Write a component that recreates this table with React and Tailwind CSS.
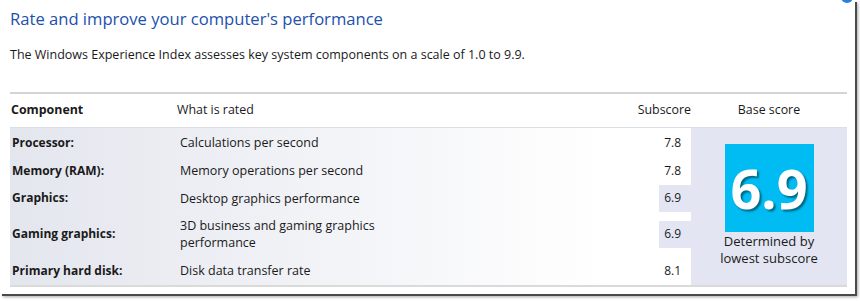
import React from "react";

const rows = [
  { label: "Processor:", what: ["Calculations per second"], score: "7.8", low: false, h: "h-[29px]" },
  { label: "Memory (RAM):", what: ["Memory operations per second"], score: "7.8", low: false, h: "h-[27px]" },
  { label: "Graphics:", what: ["Desktop graphics performance"], score: "6.9", low: true, h: "h-[28px]" },
  { label: "Gaming graphics:", what: ["3D business and gaming graphics", "performance"], score: "6.9", low: true, h: "h-[44px]" },
  { label: "Primary hard disk:", what: ["Disk data transfer rate"], score: "8.1", low: false, h: "h-[29px]" },
];

export default function App() {
  return (
    <div className="w-[860px] h-[301px] bg-white relative overflow-hidden font-['Open_Sans',sans-serif] text-[#1a1a1a]">
      <div className="w-[855px] h-[294px] bg-white shadow-[2px_2px_0_#4a4a4a,3px_3px_3px_rgba(0,0,0,0.35)] pl-[10px]">
        <div className="pt-[7px] text-[16.6px] leading-[24px] text-[#2150ad]">
          Rate and improve your computer's performance
        </div>
        <div className="mt-[15px] text-[12.5px] leading-[18px]">
          The Windows Experience Index assesses key system components on a scale of 1.0 to 9.9.
        </div>
        <div className="mt-[28px] w-[837px] border-t-2 border-b-2 border-t-[#d4d4d4] border-b-[#dadada]">
          <div className="flex h-[33px] items-center text-[12.4px]">
            <div className="w-[167px] pl-[1px] font-bold">Component</div>
            <div className="w-[482px]">What is rated</div>
            <div className="w-[32px] flex justify-end">
              <span className="whitespace-nowrap">Subscore</span>
            </div>
            <div className="w-[156px] text-center">Base score</div>
          </div>
          <div className="flex border-t border-[#dcdfe6]">
            <div className="w-[681px] flex flex-col">
              {rows.map((r) => (
                <div key={r.label} className={`flex ${r.h}`}>
                  <div className="flex flex-1 items-center bg-[linear-gradient(to_right,#e4e6ee,#ffffff_92%)]">
                    <div className="w-[170px] pl-[2px] font-bold text-[12px]">{r.label}</div>
                    <div className="leading-[17px] text-[12.5px]">
                      {r.what.map((w) => (
                        <div key={w}>{w}</div>
                      ))}
                    </div>
                  </div>
                  <div className="w-[32px] flex items-center bg-white">
                    <div
                      className={`w-full h-[27px] flex items-center justify-end pr-[10px] text-[12px] ${
                        r.low ? "bg-[#e3e6f2]" : ""
                      }`}
                    >
                      {r.score}
                    </div>
                  </div>
                </div>
              ))}
            </div>
            <div className="w-[156px] bg-[#e3e6f2] flex flex-col items-center pt-[16px]">
              <div className="w-[89px] h-[88px] bg-[#00bcf2] flex items-center justify-center">
                <span className="text-white font-bold text-[54px] leading-none [text-shadow:2px_2px_2px_rgba(0,0,0,0.45)]">
                  6.9
                </span>
              </div>
              <div className="mt-[1px] text-[13px] leading-[17px] text-center">
                Determined by
                <br />
                lowest subscore
              </div>
            </div>
          </div>
        </div>
      </div>
      <div className="absolute left-[841px] top-[-9px] w-[12px] h-[12px] rounded-full bg-[#2b7de0]" />
    </div>
  );
}
